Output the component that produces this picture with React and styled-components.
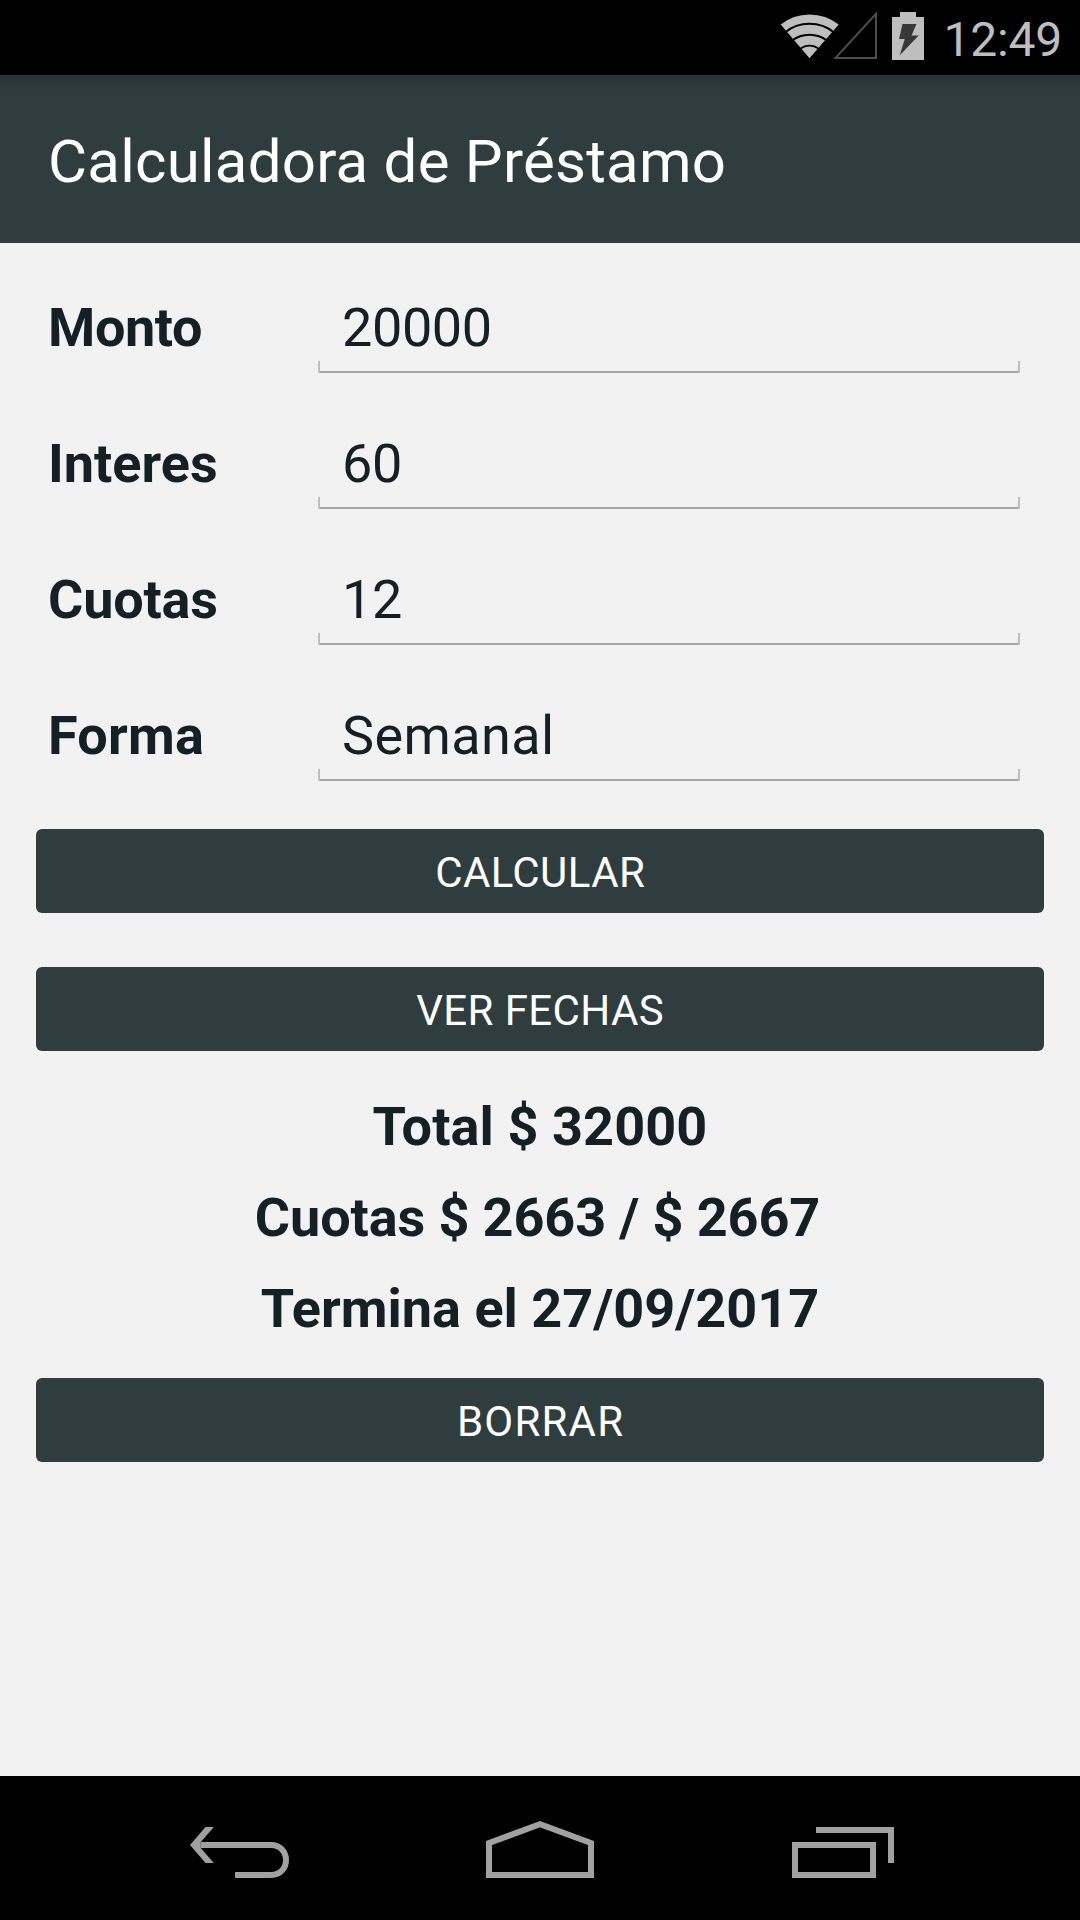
import React from "react";
import styled, { createGlobalStyle } from "styled-components";

const GlobalStyle = createGlobalStyle`
  body { margin: 0; background: #f2f2f2; }
  * { box-sizing: border-box; }
`;

const Screen = styled.div`
  display: flex;
  flex-direction: column;
  width: 1080px;
  height: 1920px;
  overflow: hidden;
  background: #f2f2f2;
  color: #152026;
  font-family: Roboto, "Noto Sans", sans-serif;
`;

const StatusBar = styled.header`
  display: flex;
  align-items: flex-start;
  justify-content: flex-end;
  height: 75px;
  padding-right: 18px;
  background: #000;
`;

const StatusIcon = styled.svg`
  display: block;
  flex: none;
  margin-left: ${(p) => p.$gap || 0}px;
`;

const Clock = styled.span`
  width: 120px;
  margin-left: 18px;
  padding-top: 12px;
  font-size: 48px;
  line-height: 56px;
  color: #bebebe;
  text-align: right;
  letter-spacing: -0.2px;
  white-space: nowrap;
`;

const AppBar = styled.div`
  display: flex;
  align-items: center;
  height: 168px;
  padding: 5px 48px 0;
  background: linear-gradient(#2a3436 0, #2e3a3c 10px, #303d3f 28px);
`;

const Title = styled.h1`
  margin: 0;
  font-size: 60px;
  font-weight: 400;
  line-height: 70px;
  letter-spacing: 0.24px;
  color: #fff;
  white-space: nowrap;
`;

const Content = styled.main`
  display: flex;
  flex: 1;
  flex-direction: column;
  padding: 24px 36px 0;
`;

const Form = styled.div`
  display: flex;
  flex-direction: column;
  gap: 30px;
  padding: 0 24px 0 12px;
  margin-bottom: 48px;
`;

const Row = styled.div`
  display: grid;
  grid-template-columns: 270px 702px;
  height: 106px;
  font-size: 54px;
  line-height: 64px;
`;

const Label = styled.label`
  align-self: end;
  padding-bottom: 13px;
  font-weight: 700;
  letter-spacing: ${(p) => p.$tracking}px;
`;

const Field = styled.div`
  display: flex;
  flex-direction: column;
  justify-content: flex-end;
`;

const Value = styled.span`
  height: 65px;
  padding-left: 24px;
  letter-spacing: ${(p) => p.$tracking}px;
`;

const Underline = styled.div`
  height: 12px;
  border: solid #bfbfbf;
  border-width: 0 2px;
  background: linear-gradient(#a6a6a6, #a6a6a6) bottom / 100% 2px no-repeat;
`;

const Button = styled.button`
  flex: none;
  height: 84px;
  margin: 0;
  padding: 3px 0 0 ${(p) => p.$tracking}px;
  border: 0;
  border-radius: 6px;
  background: #303d3f;
  color: #fff;
  font-family: inherit;
  font-size: 42px;
  line-height: 50px;
  letter-spacing: ${(p) => p.$tracking}px;
`;

const Actions = styled.div`
  display: flex;
  flex-direction: column;
  gap: 54px;
`;

const Results = styled.div`
  display: flex;
  flex-direction: column;
  gap: 27px;
  height: 327px;
  padding-top: 44px;
`;

const Result = styled.p`
  margin: 0;
  padding-right: ${(p) => p.$trail || 0}px;
  font-size: 54px;
  font-weight: 700;
  line-height: 64px;
  letter-spacing: ${(p) => p.$tracking || 0}px;
  text-align: center;
  white-space: nowrap;
`;

const NavBar = styled.nav`
  display: flex;
  gap: 150px;
  height: 144px;
  padding-left: 170px;
  background: #000;
`;

const NavIcon = styled.svg`
  flex: none;
  width: 150px;
  height: 144px;
  fill: none;
  stroke: #a1a1a1;
  stroke-width: 6;
`;

const fields = [
  { label: "Monto", value: "20000", labelTracking: -0.4, valueTracking: -0.4 },
  { label: "Interes", value: "60", labelTracking: 0, valueTracking: -0.4 },
  { label: "Cuotas", value: "12", labelTracking: -0.2, valueTracking: -0.4 },
  { label: "Forma", value: "Semanal", labelTracking: 0.2, valueTracking: 0.4 },
];

function WifiIcon() {
  return (
    <StatusIcon width="60" height="75" viewBox="0 0 60 75">
      <path d="M29.5 58.3 L0.7 24.5 Q13 14.4 29.5 14.4 Q46 14.4 58.7 24.5 Z" fill="#bebebe" />
      <g fill="none" stroke="#000" strokeWidth="1.9">
        <path d="M5 32.4 Q15.5 23.8 29.5 23.8 Q43.5 23.8 54 32.4" />
        <path d="M11.5 41 Q19.5 34.8 29.5 34.8 Q39.5 34.8 47.5 41" />
        <path d="M19 49.7 Q24 45.6 29.5 45.6 Q35 45.6 40 49.7" />
      </g>
    </StatusIcon>
  );
}

function SignalIcon() {
  return (
    <StatusIcon $gap={-8} width="46" height="75" viewBox="0 0 46 75">
      <path d="M3.3 58.1 L44 13.8 V58.1 Z" fill="none" stroke="#4e4e4e" strokeWidth="2" />
    </StatusIcon>
  );
}

function BatteryIcon() {
  return (
    <StatusIcon $gap={14} width="32" height="75" viewBox="0 0 32 75">
      <path d="M8 12 H24 V17 H32 V60 H0 V17 H8 Z" fill="#bebebe" />
      <path d="M10.5 24 H24.5 L19.5 35.6 H26.7 L7.8 55.2 L12.7 39 H7 Z" fill="#383838" />
    </StatusIcon>
  );
}

export default function App() {
  return (
    <>
      <GlobalStyle />
      <Screen>
        <StatusBar>
          <WifiIcon />
          <SignalIcon />
          <BatteryIcon />
          <Clock>12:49</Clock>
        </StatusBar>
        <AppBar>
          <Title>Calculadora de Préstamo</Title>
        </AppBar>
        <Content>
          <Form>
            {fields.map((f) => (
              <Row key={f.label}>
                <Label $tracking={f.labelTracking}>{f.label}</Label>
                <Field>
                  <Value $tracking={f.valueTracking}>{f.value}</Value>
                  <Underline />
                </Field>
              </Row>
            ))}
          </Form>
          <Actions>
            <Button $tracking={0.4}>CALCULAR</Button>
            <Button $tracking={0.4}>VER FECHAS</Button>
          </Actions>
          <Results>
            <Result $tracking={0.1}>Total $ 32000</Result>
            <Result $trail={5} $tracking={-0.12}>Cuotas $ 2663 / $ 2667</Result>
            <Result>Termina el 27/09/2017</Result>
          </Results>
          <Button $tracking={1.2}>BORRAR</Button>
        </Content>
        <NavBar>
          <NavIcon viewBox="0 0 150 144">
            <path d="M31 69 H101 C121 69 121 99 101 99 H65" transform="translate(0 0)" />
            <path d="M35.5 51 H43.8 L30.8 66 V72 L43.8 87 H35.5 L20 69 Z" fill="#a1a1a1" stroke="none" />
          </NavIcon>
          <NavIcon viewBox="0 0 150 144">
            <path d="M19 99 V67 L70 48.2 L121 67 V99 Z" />
          </NavIcon>
          <NavIcon viewBox="0 0 150 144">
            <path d="M25 69 H103 V99 H25 Z" />
            <path d="M46 54 H121 V87" />
          </NavIcon>
        </NavBar>
      </Screen>
    </>
  );
}
